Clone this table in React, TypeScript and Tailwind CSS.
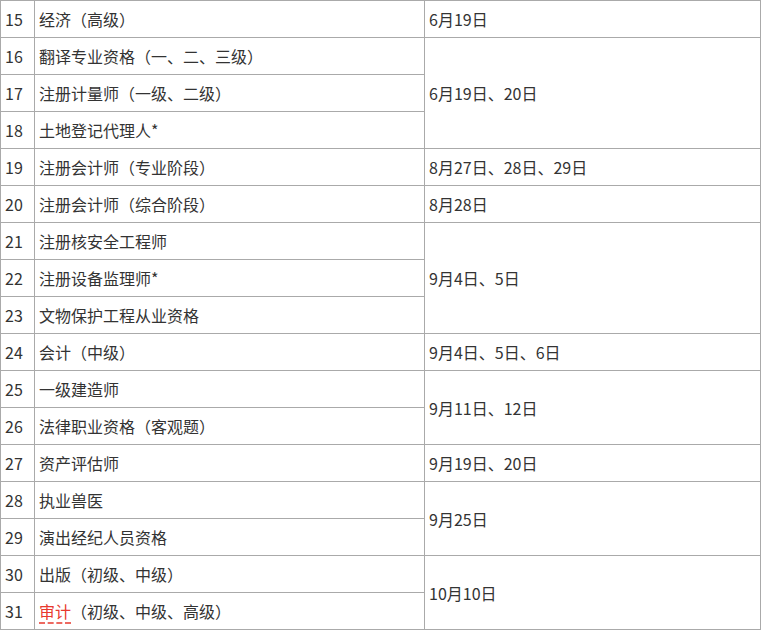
import React from "react";

type Row = { n: number; name: React.ReactNode; date?: string; span?: number };

const rows: Row[] = [
  { n: 15, name: "经济（高级）", date: "6月19日", span: 1 },
  { n: 16, name: "翻译专业资格（一、二、三级）", date: "6月19日、20日", span: 3 },
  { n: 17, name: "注册计量师（一级、二级）" },
  { n: 18, name: "土地登记代理人*" },
  { n: 19, name: "注册会计师（专业阶段）", date: "8月27日、28日、29日", span: 1 },
  { n: 20, name: "注册会计师（综合阶段）", date: "8月28日", span: 1 },
  { n: 21, name: "注册核安全工程师", date: "9月4日、5日", span: 3 },
  { n: 22, name: "注册设备监理师*" },
  { n: 23, name: "文物保护工程从业资格" },
  { n: 24, name: "会计（中级）", date: "9月4日、5日、6日", span: 1 },
  { n: 25, name: "一级建造师", date: "9月11日、12日", span: 2 },
  { n: 26, name: "法律职业资格（客观题）" },
  { n: 27, name: "资产评估师", date: "9月19日、20日", span: 1 },
  { n: 28, name: "执业兽医", date: "9月25日", span: 2 },
  { n: 29, name: "演出经纪人员资格" },
  { n: 30, name: "出版（初级、中级）", date: "10月10日", span: 2 },
  {
    n: 31,
    name: (
      <>
        <span className="text-[#e8382e] underline decoration-dashed decoration-[#e8382e] underline-offset-[5px]">
          审计
        </span>
        （初级、中级、高级）
      </>
    ),
  },
];

export default function App() {
  return (
    <div className="bg-white w-[762px] h-[632px] overflow-hidden">
      <table
        className="border-collapse table-fixed w-[760px] text-[16px] text-[#333]"
        style={{ fontFamily: '"Microsoft YaHei", "Noto Sans CJK SC", sans-serif' }}
      >
        <colgroup>
          <col className="w-[34px]" />
          <col className="w-[390px]" />
          <col className="w-[336px]" />
        </colgroup>
        <tbody>
          {rows.map((r) => (
            <tr key={r.n} className="h-[37px]">
              <td className="border border-[#aaaaaa] pl-[4px] py-0 align-middle leading-none">{r.n}</td>
              <td className="border border-[#aaaaaa] pl-[4px] py-0 align-middle leading-none whitespace-nowrap">
                {r.name}
              </td>
              {r.date && (
                <td
                  rowSpan={r.span}
                  className="border border-[#aaaaaa] pl-[4px] py-0 align-middle leading-none whitespace-nowrap"
                >
                  {r.date}
                </td>
              )}
            </tr>
          ))}
        </tbody>
      </table>
    </div>
  );
}
